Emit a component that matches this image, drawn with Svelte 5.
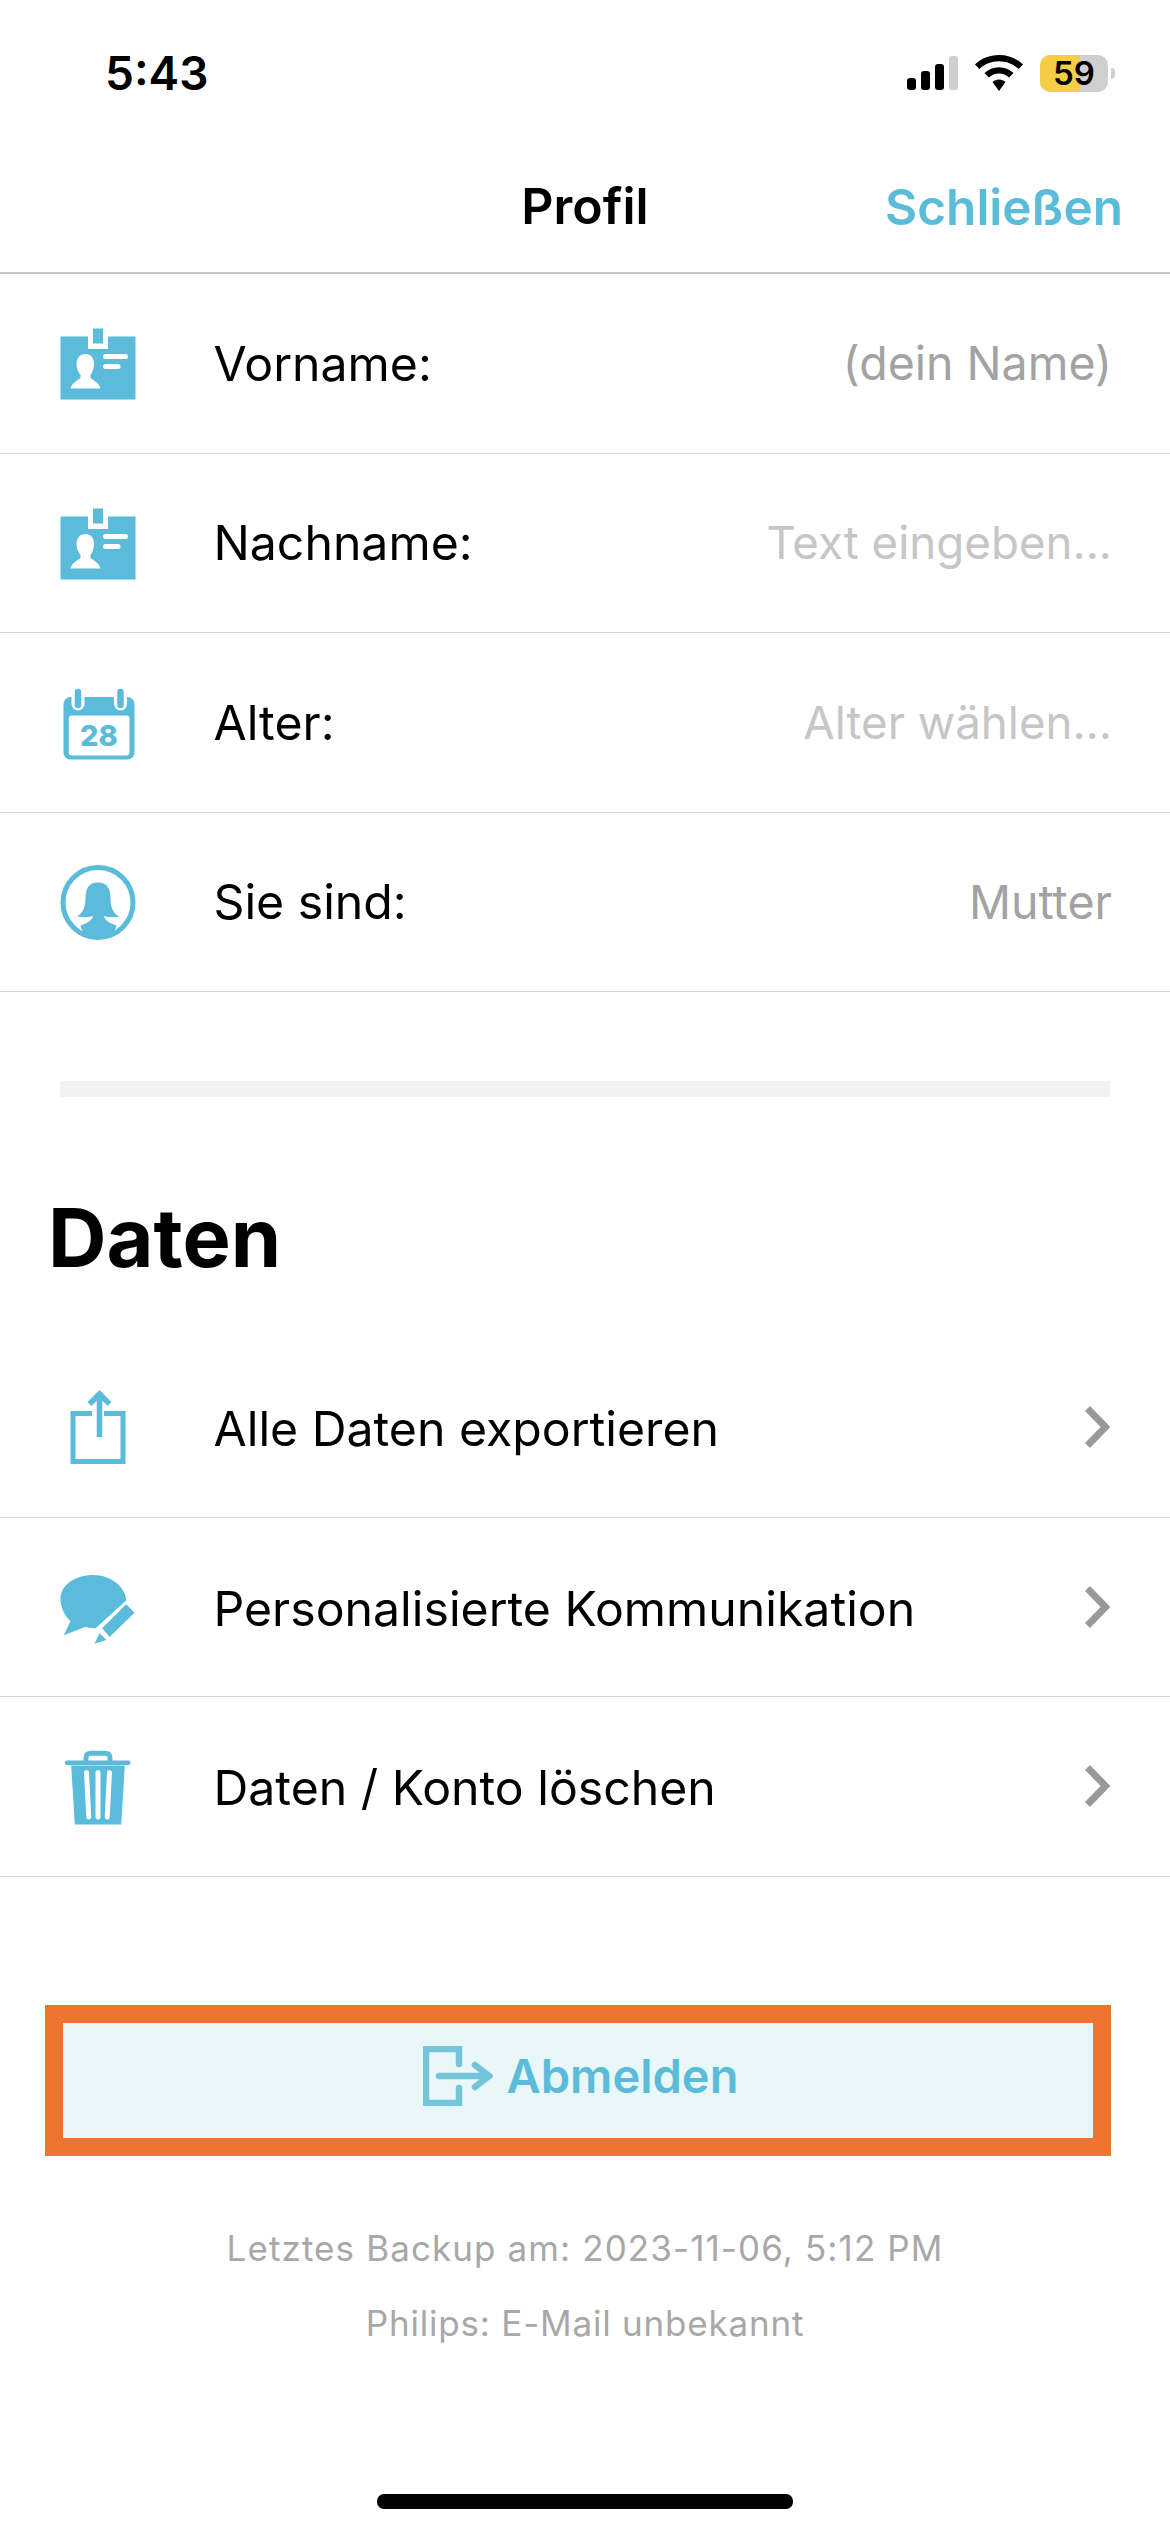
<script lang="ts">
  const profileRows = [
    { icon: 'card', label: 'Vorname:', value: '(dein Name)', tone: 'filled' },
    { icon: 'card', label: 'Nachname:', value: 'Text eingeben...', tone: 'hint' },
    { icon: 'calendar', label: 'Alter:', value: 'Alter wählen...', tone: 'hint' },
    { icon: 'avatar', label: 'Sie sind:', value: 'Mutter', tone: 'filled' }
  ];

  const dataRows = [
    { icon: 'export', label: 'Alle Daten exportieren' },
    { icon: 'bubble', label: 'Personalisierte Kommunikation' },
    { icon: 'trash', label: 'Daten / Konto löschen' }
  ];
</script>

{#snippet rowIcon(name: string)}
  <svg class="row-icon" viewBox="0 0 80 80" width="80" height="80" aria-hidden="true">
    {#if name === 'card'}
      <path class="fill" d="M2.5 13.5H30V26H50V13.5H77.5V76.5H2.5Z" />
      <rect class="fill" x="35" y="5.5" width="10" height="15" />
      <path class="cut" d="M27.5 31C33 31 36 35 36 41C36 46 34 50 32.5 52V55C36 58 41 59.5 42.5 65.5H12.5C14 59.5 19 58 22.5 55V52C21 50 18.5 46 18.5 41C18.5 35 22 31 27.5 31Z" />
      <path class="cut-line" d="M47.5 33.5H67.5M47.5 43.5H60" />
    {:else if name === 'calendar'}
      <rect class="fill" x="5.5" y="15" width="71" height="62.5" rx="7" />
      <rect class="cut" x="10.8" y="33.5" width="60.7" height="40" rx="3" />
      <path class="ring-cut" d="M20 12V22M62.5 12V22" />
      <path class="ring" d="M20 10V23M62.5 10V23" />
      <text class="cal-day" x="41" y="64" text-anchor="middle">28</text>
    {:else if name === 'avatar'}
      <circle class="line" cx="40" cy="40.5" r="35" />
      <path class="fill" d="M40 20.5C30 20.5 27.5 28 27.5 36C27.5 45 25 51 19 54.5C25 55.5 30 55.5 35 54C34.5 58 30 61 22.5 63.5C23.5 68 25 70 27 72C31 74.5 36 75.5 40 75.5C45 75.5 50 74.5 54 72C56 70 57.5 68 58.5 63.5C51 61 46.5 58 46 54C51 55.5 56 55.5 61 54.5C55 51 52.5 45 52.5 36C52.5 28 50 20.5 40 20.5Z" />
    {:else if name === 'export'}
      <path class="line" d="M34 26.5H15V74.5H65V26.5H46" />
      <path class="line arrow" d="M41.5 50V7M31.5 17L41.5 7L51.5 17" />
    {:else if name === 'bubble'}
      <path class="fill" d="M68.4 33.3C67 19 52 8 35.5 8C17 8 2.5 18 2.5 32C2.5 41 7 49 12.5 54L5.8 68.3L27 60C30 60.5 33 61 37.5 61.3Z" />
      <path class="fill" d="M68.2 37.3L76.5 45.7L51.5 70L44.2 61.3Z" />
      <path class="fill" d="M41.5 66.3L48.5 73L36.5 76.7Z" />
    {:else if name === 'trash'}
      <path class="fill" d="M13.2 19.5H66.8L63.2 78.5H16.8Z" />
      <path class="lid" d="M9 16.8H70.3" />
      <path class="handle" d="M28 15V11.5C28 8.5 30 7.2 32.5 7.2H47.5C50 7.2 52 8.5 52 11.5V15" />
      <path class="cut-line" d="M28.5 26.5L30.8 71M40 26.5V71M51.5 26.5L49.2 71" />
    {/if}
  </svg>
{/snippet}

<div class="screen">
  <header class="status-bar">
    <span class="time">5:43</span>
    <div class="status-icons">
      <svg width="51" height="34" viewBox="0 0 51 34" aria-hidden="true">
        <rect x="0" y="22" width="9" height="12" rx="3" />
        <rect x="14" y="15" width="9" height="19" rx="3" />
        <rect x="28" y="8" width="9" height="26" rx="3" />
        <rect x="42" y="0" width="9" height="34" rx="3" fill="#cfcfcf" />
      </svg>
      <svg width="48" height="36" viewBox="0 0 48 36" aria-hidden="true">
        <path d="M24 0C33.5 0 41.8 3.5 48 9.4L43.6 14C38.6 9.2 31.7 6.2 24 6.2C16.3 6.2 9.4 9.2 4.4 14L0 9.4C6.2 3.5 14.5 0 24 0Z" />
        <path d="M24 12.2C29.6 12.2 34.7 14.4 38.5 18L34.2 22.5C31.5 20 27.9 18.4 24 18.4C20.1 18.4 16.5 20 13.8 22.5L9.5 18C13.3 14.4 18.4 12.2 24 12.2Z" />
        <path d="M24 24.4C26.5 24.4 28.8 25.4 30.5 27L24 36L17.5 27C19.2 25.4 21.5 24.4 24 24.4Z" />
      </svg>
      <div class="battery">59</div>
    </div>
  </header>

  <nav class="nav-bar">
    <h1>Profil</h1>
    <button class="close">Schließen</button>
  </nav>

  <section>
    {#each profileRows as row}
      <div class="row">
        <div class="icon-slot">{@render rowIcon(row.icon)}</div>
        <span class="label">{row.label}</span>
        <span class={`value ${row.tone}`}>{row.value}</span>
      </div>
    {/each}
  </section>

  <div class="divider"></div>

  <h2>Daten</h2>

  <section class="data-rows">
    {#each dataRows as row}
      <div class="row">
        <div class="icon-slot">{@render rowIcon(row.icon)}</div>
        <span class="label">{row.label}</span>
        <svg class="chevron" width="30" height="44" viewBox="0 0 30 44" aria-hidden="true">
          <path d="M3.5 3.5L21.5 22L3.5 40.5" />
        </svg>
      </div>
    {/each}
  </section>

  <div class="logout-frame">
    <button class="logout">
      <svg width="70" height="60" viewBox="0 0 70 60" aria-hidden="true">
        <path class="logout-box" d="M36 18V3H3V57H36V42" />
        <path class="logout-arrow" d="M16 30H66M52 19L66 30L52 41" />
      </svg>
      <span>Abmelden</span>
    </button>
  </div>

  <footer>
    <p>Letztes Backup am: 2023-11-06, 5:12 PM</p>
    <p class="account">Philips: E-Mail unbekannt</p>
  </footer>

  <div class="home-indicator"></div>
</div>

<style>
  :global(body) {
    margin: 0;
    background: #ffffff;
  }

  .screen {
    width: 1170px;
    height: 2532px;
    overflow: hidden;
    font-family: Inter, 'Noto Sans', sans-serif;
    color: #000000;
  }

  .status-bar {
    height: 146px;
    display: flex;
    align-items: center;
    justify-content: space-between;
    padding: 0 55px 0 105px;
    box-sizing: border-box;
  }

  .time {
    font-size: 46px;
    font-weight: 600;
  }

  .status-icons {
    display: flex;
    align-items: center;
    gap: 17px;
    padding-right: 7px;
  }

  .battery {
    position: relative;
    width: 68px;
    height: 37px;
    border-radius: 10px;
    background: linear-gradient(90deg, #f5cd47 40px, #cfcfcf 40px);
    font-size: 33px;
    font-weight: 600;
    line-height: 37px;
    text-align: center;
  }

  .battery::after {
    content: '';
    position: absolute;
    left: 71px;
    top: 13px;
    width: 4px;
    height: 11px;
    border-radius: 0 6px 6px 0;
    background: #cfcfcf;
  }

  .nav-bar {
    height: 128px;
    display: flex;
    align-items: center;
    justify-content: center;
    position: relative;
    padding-bottom: 6px;
    box-sizing: border-box;
    border-bottom: 2px solid #c8c8c8;
  }

  h1 {
    margin: 0;
    font-size: 50px;
    font-weight: 600;
  }

  .close {
    position: absolute;
    right: 47px;
    top: 31px;
    padding: 0;
    border: none;
    background: none;
    font: inherit;
    font-size: 49.5px;
    font-weight: 600;
    color: #5bbcd9;
  }

  .row {
    height: 179.5px;
    box-sizing: border-box;
    display: flex;
    align-items: center;
    border-bottom: 1.5px solid #d4d4d4;
    padding-right: 58px;
  }

  .icon-slot {
    width: 213.5px;
    flex: none;
    padding-left: 57.5px;
    box-sizing: border-box;
    display: flex;
    align-items: center;
  }

  .row-icon {
    display: block;
  }

  .fill {
    fill: #5abbdb;
  }

  .cut {
    fill: #ffffff;
  }

  .cut-line {
    fill: none;
    stroke: #ffffff;
    stroke-width: 5;
    stroke-linecap: round;
  }

  .line {
    fill: none;
    stroke: #5abbdb;
    stroke-width: 5;
  }

  .line.arrow {
    stroke-width: 5.5;
  }

  .ring {
    fill: none;
    stroke: #5abbdb;
    stroke-width: 6.5;
    stroke-linecap: round;
  }

  .ring-cut {
    fill: none;
    stroke: #ffffff;
    stroke-width: 13;
    stroke-linecap: round;
  }

  .cal-day {
    font-family: Inter, sans-serif;
    font-size: 29px;
    font-weight: 800;
    fill: #5abbdb;
  }

  .lid {
    fill: none;
    stroke: #5abbdb;
    stroke-width: 4.5;
    stroke-linecap: round;
  }

  .handle {
    fill: none;
    stroke: #5abbdb;
    stroke-width: 5;
  }

  .label {
    font-size: 48.2px;
    flex: 1;
  }

  .data-rows .label {
    padding-top: 3px;
  }

  .value {
    font-size: 45.7px;
  }

  .value.filled {
    font-size: 46.5px;
    color: #a3a3a3;
  }

  .value.hint {
    color: #c6c6c8;
  }

  .chevron {
    margin-right: -2px;
  }

  .chevron path {
    fill: none;
    stroke: #999999;
    stroke-width: 7;
  }

  .divider {
    height: 16px;
    margin: 89px 60px 0;
    background: #f2f2f2;
  }

  h2 {
    margin: 91px 0 50px 48px;
    font-size: 81px;
    line-height: 100px;
    font-weight: 700;
  }

  .logout-frame {
    margin: 128px 59px 0 45px;
    border: 18px solid #ee7430;
  }

  .logout {
    width: 100%;
    height: 115px;
    display: flex;
    align-items: center;
    justify-content: center;
    gap: 14px;
    padding: 0 0 9px 5px;
    border: none;
    background: #eaf7f9;
    font: inherit;
    font-size: 47px;
    font-weight: 600;
    color: #5bbcd9;
  }

  .logout-box,
  .logout-arrow {
    fill: none;
    stroke: #74c5d9;
    stroke-width: 6.5;
    stroke-linecap: round;
  }

  footer {
    margin-top: 55px;
    text-align: center;
    font-size: 35px;
    color: #a8a8a8;
    letter-spacing: 1.1px;
  }

  footer p {
    margin: 0;
    line-height: 75px;
  }

  footer .account {
    letter-spacing: 0.8px;
  }

  .home-indicator {
    width: 416px;
    height: 15px;
    margin: 133.5px auto 0;
    border-radius: 7px;
    background: #000000;
  }
</style>
